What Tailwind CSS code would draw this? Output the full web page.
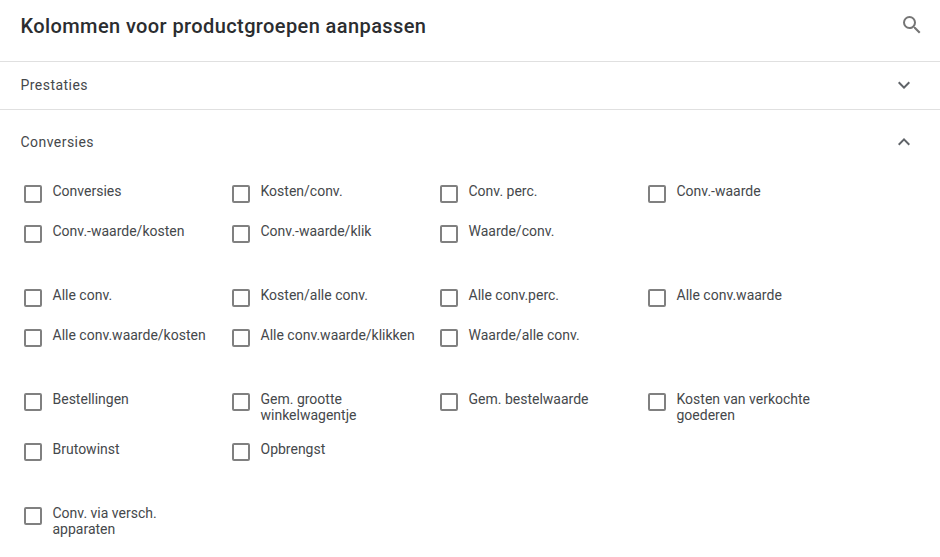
<!DOCTYPE html>
<html lang="en">
  <head>
    <meta charset="UTF-8" />
    <meta name="viewport" content="width=device-width, initial-scale=1.0" />
    <script src="https://cdn.jsdelivr.net/npm/@tailwindcss/browser@4"></script>
    <title>Kolommen voor productgroepen aanpassen</title>
  </head>
  <body class="bg-white font-['Roboto',sans-serif] text-[#45484b] overflow-hidden">
    <div class="w-[940px] h-[557px] overflow-hidden">
      <!-- Header -->
      <div class="h-[62px] flex items-center justify-between pl-[20.5px] pr-[16px] border-b border-[#e0e0e0]">
        <h1 class="text-[20px] leading-6 font-medium tracking-[0.4px] text-[#2b2d30] -mt-[9px]">Kolommen voor productgroepen aanpassen</h1>
        <svg class="w-6 h-6 -mt-[11px] fill-[#757575]" viewBox="0 0 24 24"><path d="M15.5 14h-.79l-.28-.27A6.47 6.47 0 0 0 16 9.5 6.5 6.5 0 1 0 9.5 16c1.61 0 3.09-.59 4.23-1.57l.27.28v.79l5 4.99L20.49 19l-4.99-5zm-6 0C7.01 14 5 11.99 5 9.5S7.01 5 9.5 5 14 7.01 14 9.5 11.99 14 9.5 14z"/></svg>
      </div>

      <!-- Prestaties -->
      <div class="h-[48px] flex items-center justify-between pl-[20.5px] pr-[24px] border-b border-[#e0e0e0]">
        <span class="text-sm leading-4 tracking-[0.45px] -mt-[1px]">Prestaties</span>
        <svg class="w-6 h-6 -mt-[1px] fill-[#5f6368]" viewBox="0 0 24 24"><path d="M7.41 8.59 12 13.17l4.59-4.58L18 10l-6 6-6-6z"/></svg>
      </div>

      <!-- Conversies -->
      <div class="h-[63px] flex items-center justify-between pl-[20.5px] pr-[24px] mb-[11px]">
        <span class="text-sm leading-4 tracking-[0.45px]">Conversies</span>
        <svg class="w-6 h-6 fill-[#5f6368]" viewBox="0 0 24 24"><path d="M12 8l-6 6 1.41 1.41L12 10.83l4.59 4.58L18 14z"/></svg>
      </div>

      <div class="pl-[23.5px] text-sm leading-4">
        <div class="grid grid-cols-[208px_208px_208px_208px] grid-rows-[40px_40px] mb-6">
          <label class="flex gap-[11px] items-start"><span class="w-[18px] h-[18px] mt-[1px] shrink-0 border-2 border-[#808080] rounded-[2px]"></span><span class="w-[156px] -mt-[1px]">Conversies</span></label>
          <label class="flex gap-[11px] items-start"><span class="w-[18px] h-[18px] mt-[1px] shrink-0 border-2 border-[#808080] rounded-[2px]"></span><span class="w-[156px] -mt-[1px]">Kosten/conv.</span></label>
          <label class="flex gap-[11px] items-start"><span class="w-[18px] h-[18px] mt-[1px] shrink-0 border-2 border-[#808080] rounded-[2px]"></span><span class="w-[156px] -mt-[1px]">Conv. perc.</span></label>
          <label class="flex gap-[11px] items-start"><span class="w-[18px] h-[18px] mt-[1px] shrink-0 border-2 border-[#808080] rounded-[2px]"></span><span class="w-[156px] -mt-[1px]">Conv.-waarde</span></label>
          <label class="flex gap-[11px] items-start"><span class="w-[18px] h-[18px] mt-[1px] shrink-0 border-2 border-[#808080] rounded-[2px]"></span><span class="w-[156px] -mt-[1px]">Conv.-waarde/kosten</span></label>
          <label class="flex gap-[11px] items-start"><span class="w-[18px] h-[18px] mt-[1px] shrink-0 border-2 border-[#808080] rounded-[2px]"></span><span class="w-[156px] -mt-[1px]">Conv.-waarde/klik</span></label>
          <label class="flex gap-[11px] items-start"><span class="w-[18px] h-[18px] mt-[1px] shrink-0 border-2 border-[#808080] rounded-[2px]"></span><span class="w-[156px] -mt-[1px]">Waarde/conv.</span></label>
        </div>

        <div class="grid grid-cols-[208px_208px_208px_208px] grid-rows-[40px_40px] mb-6">
          <label class="flex gap-[11px] items-start"><span class="w-[18px] h-[18px] mt-[1px] shrink-0 border-2 border-[#808080] rounded-[2px]"></span><span class="w-[156px] -mt-[1px]">Alle conv.</span></label>
          <label class="flex gap-[11px] items-start"><span class="w-[18px] h-[18px] mt-[1px] shrink-0 border-2 border-[#808080] rounded-[2px]"></span><span class="w-[156px] -mt-[1px]">Kosten/alle conv.</span></label>
          <label class="flex gap-[11px] items-start"><span class="w-[18px] h-[18px] mt-[1px] shrink-0 border-2 border-[#808080] rounded-[2px]"></span><span class="w-[156px] -mt-[1px]">Alle conv.perc.</span></label>
          <label class="flex gap-[11px] items-start"><span class="w-[18px] h-[18px] mt-[1px] shrink-0 border-2 border-[#808080] rounded-[2px]"></span><span class="w-[156px] -mt-[1px]">Alle conv.waarde</span></label>
          <label class="flex gap-[11px] items-start"><span class="w-[18px] h-[18px] mt-[1px] shrink-0 border-2 border-[#808080] rounded-[2px]"></span><span class="w-[156px] -mt-[1px]">Alle conv.waarde/kosten</span></label>
          <label class="flex gap-[11px] items-start"><span class="w-[18px] h-[18px] mt-[1px] shrink-0 border-2 border-[#808080] rounded-[2px]"></span><span class="w-[156px] -mt-[1px]">Alle conv.waarde/klikken</span></label>
          <label class="flex gap-[11px] items-start"><span class="w-[18px] h-[18px] mt-[1px] shrink-0 border-2 border-[#808080] rounded-[2px]"></span><span class="w-[156px] -mt-[1px]">Waarde/alle conv.</span></label>
        </div>

        <div class="grid grid-cols-[208px_208px_208px_208px] grid-rows-[50px_40px] mb-6">
          <label class="flex gap-[11px] items-start"><span class="w-[18px] h-[18px] mt-[1px] shrink-0 border-2 border-[#808080] rounded-[2px]"></span><span class="w-[156px] -mt-[1px]">Bestellingen</span></label>
          <label class="flex gap-[11px] items-start"><span class="w-[18px] h-[18px] mt-[1px] shrink-0 border-2 border-[#808080] rounded-[2px]"></span><span class="w-[156px] -mt-[1px]">Gem. grootte winkelwagentje</span></label>
          <label class="flex gap-[11px] items-start"><span class="w-[18px] h-[18px] mt-[1px] shrink-0 border-2 border-[#808080] rounded-[2px]"></span><span class="w-[156px] -mt-[1px]">Gem. bestelwaarde</span></label>
          <label class="flex gap-[11px] items-start"><span class="w-[18px] h-[18px] mt-[1px] shrink-0 border-2 border-[#808080] rounded-[2px]"></span><span class="w-[156px] -mt-[1px]">Kosten van verkochte goederen</span></label>
          <label class="flex gap-[11px] items-start"><span class="w-[18px] h-[18px] mt-[1px] shrink-0 border-2 border-[#808080] rounded-[2px]"></span><span class="w-[156px] -mt-[1px]">Brutowinst</span></label>
          <label class="flex gap-[11px] items-start"><span class="w-[18px] h-[18px] mt-[1px] shrink-0 border-2 border-[#808080] rounded-[2px]"></span><span class="w-[156px] -mt-[1px]">Opbrengst</span></label>
        </div>

        <div class="grid grid-cols-[208px_208px_208px_208px]">
          <label class="flex gap-[11px] items-start"><span class="w-[18px] h-[18px] mt-[1px] shrink-0 border-2 border-[#808080] rounded-[2px]"></span><span class="w-[156px] -mt-[1px]">Conv. via versch. apparaten</span></label>
        </div>
      </div>
    </div>
  </body>
</html>
